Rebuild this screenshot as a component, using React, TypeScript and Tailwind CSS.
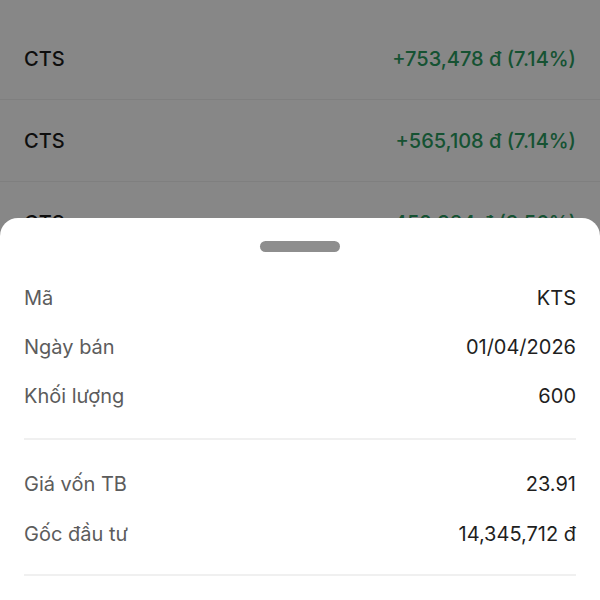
import React from 'react';

interface ProfitRow {
  code: string;
  profit: string;
}

interface DetailRow {
  label: string;
  value: string;
}

const profitRows: ProfitRow[] = [
  { code: 'CTS', profit: '+753,478 đ (7.14%)' },
  { code: 'CTS', profit: '+565,108 đ (7.14%)' },
  { code: 'CTS', profit: '+452,384 đ (3.56%)' },
  { code: 'CTS', profit: '+318,200 đ (3.56%)' },
];

const sections: DetailRow[][] = [
  [
    { label: 'Mã', value: 'KTS' },
    { label: 'Ngày bán', value: '01/04/2026' },
    { label: 'Khối lượng', value: '600' },
  ],
  [
    { label: 'Giá vốn TB', value: '23.91' },
    { label: 'Gốc đầu tư', value: '14,345,712 đ' },
  ],
];

const font = { fontFamily: 'Inter, "Noto Sans", sans-serif' };

export default function App() {
  return (
    <div className="relative h-[600px] w-[600px] overflow-hidden bg-white" style={font}>
      {/* list behind the sheet */}
      <div className="pt-[18px]">
        {profitRows.map((row, i) => (
          <div
            key={i}
            className="flex h-[82px] items-center justify-between border-b border-[#f0f0f0] px-6"
          >
            <span className="text-[20px] font-medium text-[#1c1c1c]">{row.code}</span>
            <span className="text-[20px] font-medium text-[#2a9c5f]">{row.profit}</span>
          </div>
        ))}
      </div>

      <div className="absolute inset-0 bg-black/[0.47]" />

      {/* bottom sheet */}
      <div className="absolute inset-x-0 top-[218px] bottom-0 rounded-t-[18px] bg-white">
        <div className="flex justify-center pt-[23px]">
          <div className="h-[11px] w-20 rounded-full bg-[#8e8e8e]" />
        </div>
        <div className="pt-[1px]">
          <div className="px-6 pt-[20px] pb-[18px]">
            {sections[0].map((r) => (
              <div key={r.label} className="flex h-[49px] items-center justify-between text-[20px]">
                <span className="text-[#5c5c5c]">{r.label}</span>
                <span className="text-[#1f1f1f]">{r.value}</span>
              </div>
            ))}
          </div>
          <div className="mx-6 h-[2px] bg-[#f0f0f0]" />
          <div className="px-6 pt-[19px] pb-[15px]">
            {sections[1].map((r) => (
              <div key={r.label} className="flex h-[50px] items-center justify-between text-[20px]">
                <span className="text-[#5c5c5c]">{r.label}</span>
                <span className="text-[#1f1f1f]">{r.value}</span>
              </div>
            ))}
          </div>
          <div className="mx-6 h-[2px] bg-[#f0f0f0]" />
        </div>
      </div>
    </div>
  );
}
